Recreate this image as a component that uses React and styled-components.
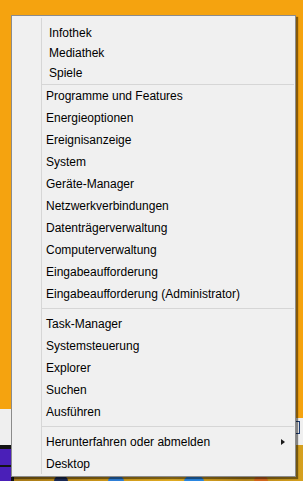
import React from 'react'
import styled, { createGlobalStyle } from 'styled-components'

const GlobalStyle = createGlobalStyle`
  html, body {
    margin: 0;
    padding: 0;
    width: 303px;
    height: 481px;
    overflow: hidden;
  }
  body {
    font-family: "Liberation Sans", Arial, sans-serif;
  }
`

// Desktop behind the menu
const Desktop = styled.div`
  position: relative;
  width: 303px;
  height: 481px;
  display: grid;
  grid-template-rows: 1fr 36px 36px;
  background: #f5a30f;
`

const WindowBand = styled.div`
  display: flex;
  justify-content: space-between;
  align-items: stretch;
`

const BandEdge = styled.div`
  width: ${p => p.$w}px;
  margin-top: ${p => p.$top}px;
  background: #efefef;
  display: flex;
  align-items: flex-start;
  justify-content: flex-end;
  padding-top: 3px;
`

const TrayMark = styled.span`
  width: 3px;
  height: 11px;
  margin-right: 3px;
  border: 1px solid #1d3d75;
  border-left: none;
`

const Taskbar = styled.div`
  display: flex;
  background: #d29d1c;
`

const StartTile = styled.div`
  width: 11px;
  background: #141414;
  display: grid;
  grid-template-rows: 16px 16px;
  row-gap: 2px;
  padding: 4px 3px 0 0;
`

const Pane = styled.div`
  background: #4a1fb8;
`

const TaskIcons = styled.div`
  flex: 1;
  display: flex;
  align-items: flex-end;
  background: linear-gradient(90deg, #a77a18 0%, #c99419 30%, #e0ab22 55%, #b9871a 80%, #d5a01e 100%);
`

const Blob = styled.span`
  width: ${p => p.$w}px;
  height: 12px;
  margin-left: ${p => p.$x}px;
  margin-bottom: -6px;
  border-radius: 50%;
  background: ${p => p.$c};
`

// The Win+X menu
const Menu = styled.div`
  position: absolute;
  left: 11px;
  top: 15px;
  width: 283px;
  height: 460px;
  border: 1px solid #8b8b8b;
  background: #f0f0f0;
  box-shadow: 2px 2px 1px rgba(0, 0, 0, 0.45);
  padding-top: 7px;
  box-sizing: content-box;
  height: 453px;
  display: flex;
  flex-direction: column;
  &:before {
    content: '';
    position: absolute;
    left: 29px;
    top: 2px;
    bottom: 2px;
    width: 1px;
    background: #d6d6d6;
  }
`

const Item = styled.div`
  position: relative;
  display: flex;
  align-items: center;
  justify-content: space-between;
  height: ${p => (p.$small ? 20 : 22)}px;
  line-height: ${p => (p.$small ? 20 : 22)}px;
  padding-left: ${p => (p.$small ? 37 : 34)}px;
  padding-right: 10px;
  font-size: 12px;
  color: #000;
  white-space: nowrap;
`

const Separator = styled.div`
  height: 1px;
  margin: ${p => (p.$tight ? '1px 1px 0 30px' : '3px 1px 4px 30px')};
  background: #d6d6d6;
`

const Arrow = styled.span`
  width: 0;
  height: 0;
  border-top: 3.5px solid transparent;
  border-bottom: 3.5px solid transparent;
  border-left: 4px solid #1a1a1a;
`

const top = ['Infothek', 'Mediathek', 'Spiele']
const tools = [
  'Programme und Features',
  'Energieoptionen',
  'Ereignisanzeige',
  'System',
  'Geräte-Manager',
  'Netzwerkverbindungen',
  'Datenträgerverwaltung',
  'Computerverwaltung',
  'Eingabeaufforderung',
  'Eingabeaufforderung (Administrator)'
]
const apps = ['Task-Manager', 'Systemsteuerung', 'Explorer', 'Suchen', 'Ausführen']

export default function App () {
  return (
    <>
      <GlobalStyle />
      <Desktop>
        <div />
        <WindowBand>
          <BandEdge $w={11} $top={0} />
          <BandEdge $w={7} $top={9}>
            <TrayMark />
          </BandEdge>
        </WindowBand>
        <Taskbar>
          <StartTile>
            <Pane />
            <Pane />
          </StartTile>
          <TaskIcons>
            <Blob $x={40} $w={14} $c='#1b2a55' />
            <Blob $x={40} $w={16} $c='#2f7fd6' />
            <Blob $x={60} $w={20} $c='#2a86e0' />
            <Blob $x={50} $w={14} $c='#d2661c' />
          </TaskIcons>
        </Taskbar>

        <Menu>
          {top.map(t => <Item key={t} $small>{t}</Item>)}
          <Separator $tight />
          {tools.map(t => <Item key={t}>{t}</Item>)}
          <Separator />
          {apps.map(t => <Item key={t}>{t}</Item>)}
          <Separator />
          <Item>
            Herunterfahren oder abmelden
            <Arrow />
          </Item>
          <Item>Desktop</Item>
        </Menu>
      </Desktop>
    </>
  )
}
